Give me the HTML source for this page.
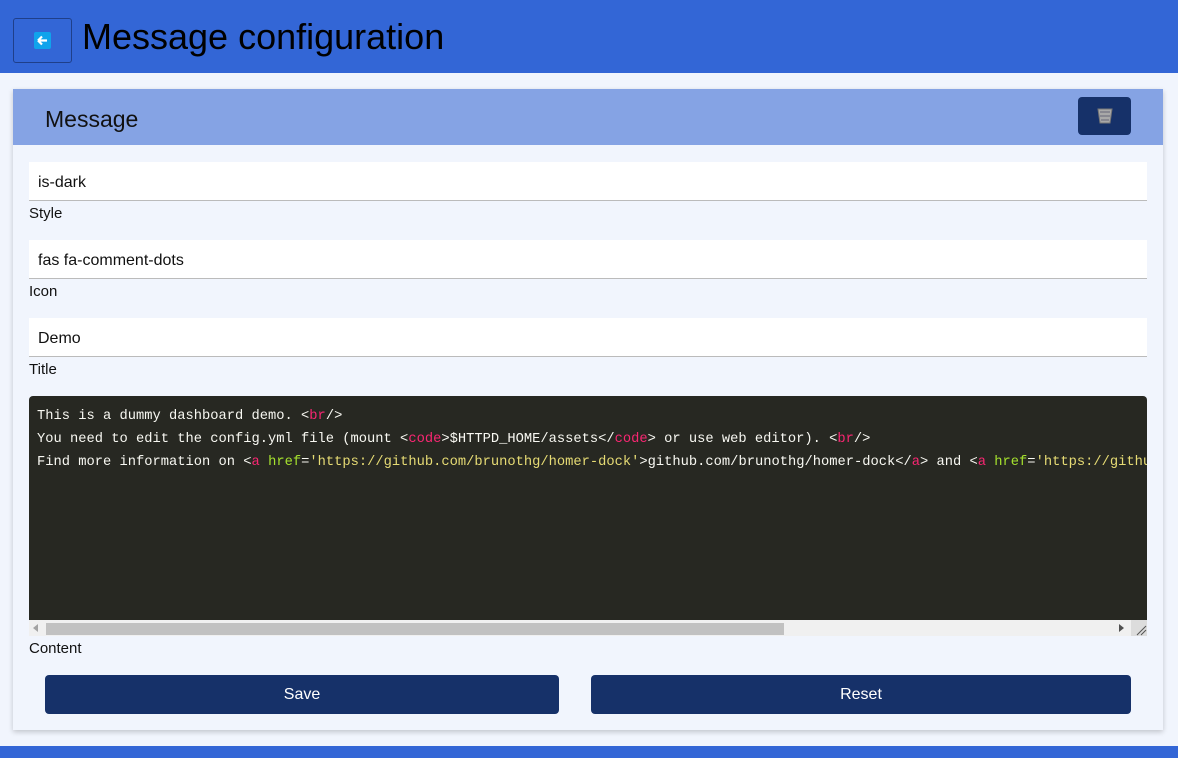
<!DOCTYPE html>
<html><head><style>
*{box-sizing:border-box;margin:0;padding:0}
body{width:1178px;height:758px;background:#f1f5fd;font-family:"Liberation Sans",sans-serif;position:relative;overflow:hidden;color:#111}
.hdr{position:absolute;left:0;top:0;width:1178px;height:73px;background:#3366d6}
.back{position:absolute;left:13px;top:18px;width:59px;height:45px;border:1px solid #1f3f8a;border-radius:3px}
.back i{position:absolute;left:20px;top:13px;width:17px;height:17px;background:#10a3ec;border-radius:2px}
.title{position:absolute;left:82px;top:16px;font-size:36px;color:#000}
.card{position:absolute;left:13px;top:89px;width:1150px;height:641px;background:#f1f5fd;box-shadow:0 2px 5px rgba(0,0,0,.2)}
.ch{height:56px;background:#85a3e4;position:relative}
.ch span{position:absolute;left:32px;top:17px;font-size:23px}
.del{position:absolute;left:1065px;top:8px;width:53px;height:38px;background:#163169;border-radius:4px}
.inp{position:absolute;left:16px;width:1118px;height:39px;background:#fff;border-bottom:1px solid #bbb;font-size:16px;padding:12px 9px}
.lbl{position:absolute;left:16px;font-size:15px}
.code{position:absolute;left:16px;top:307px;width:1118px;height:224px;background:#272822;border-radius:4px 4px 0 0;font-family:"Liberation Mono",monospace;font-size:13.75px;color:#f8f8f2;padding:9px 8px;line-height:23px;white-space:pre;overflow:hidden}
.p{color:#f92672}.g{color:#a6e22e}.y{color:#e6db74}
.sb{position:absolute;left:16px;top:531px;width:1118px;height:16px;background:#f0f0f0}
.th{position:absolute;left:17px;top:3px;width:738px;height:12px;background:#c1c1c1}
.btn{position:absolute;top:586px;height:39px;background:#163169;border-radius:4px;color:#fff;font-size:16px;text-align:center;line-height:39px}
.ftr{position:absolute;left:0;top:746px;width:1178px;height:12px;background:#3366d6}
</style></head><body>
<div class="hdr"><div class="back"><i><svg width="17" height="17"><path d="M4 8.5h9M4 8.5l4-4M4 8.5l4 4" stroke="#fff" stroke-width="2.2" fill="none"/></svg></i></div><div class="title">Message configuration</div></div>
<div class="card">
<div class="ch"><span>Message</span><div class="del"><svg width="53" height="38"><path d="M20 12h14l-2 14h-10z" fill="#a8a8a8" stroke="#777"/><path d="M22 15h10M22 19h10M23 23h8" stroke="#667" stroke-width="1"/></svg></div></div>
<div class="inp" style="top:73px">is-dark</div><div class="lbl" style="top:116px">Style</div>
<div class="inp" style="top:151px">fas fa-comment-dots</div><div class="lbl" style="top:194px">Icon</div>
<div class="inp" style="top:229px">Demo</div><div class="lbl" style="top:272px">Title</div>
<div class="code">This is a dummy dashboard demo. &lt;<span class="p">br</span>/&gt;
You need to edit the config.yml file (mount &lt;<span class="p">code</span>&gt;$HTTPD_HOME/assets&lt;/<span class="p">code</span>&gt; or use web editor). &lt;<span class="p">br</span>/&gt;
Find more information on &lt;<span class="p">a</span> <span class="g">href</span>=<span class="y">'https://github.com/brunothg/homer-dock'</span>&gt;github.com/brunothg/homer-dock&lt;/<span class="p">a</span>&gt; and &lt;<span class="p">a</span> <span class="g">href</span>=<span class="y">'https://github.com/bastienwirtz/homer'</span>&gt;</div>
<div class="sb"><div class="th"></div>
<svg style="position:absolute;left:4px;top:4px" width="6" height="8"><path d="M5 0v8L0 4z" fill="#a3a3a3"/></svg>
<svg style="position:absolute;left:1090px;top:4px" width="6" height="8"><path d="M0 0v8L5 4z" fill="#505050"/></svg>
<div style="position:absolute;left:1102px;top:0;width:16px;height:16px;background:#dcdcdc"><svg width="16" height="16"><path d="M6 15L15 6M10 15L15 10" stroke="#555" stroke-width="1"/></svg></div></div>
<div class="lbl" style="top:551px">Content</div>
<div class="btn" style="left:32px;width:514px">Save</div>
<div class="btn" style="left:578px;width:540px">Reset</div>
</div>
<div class="ftr"></div>
</body></html>
